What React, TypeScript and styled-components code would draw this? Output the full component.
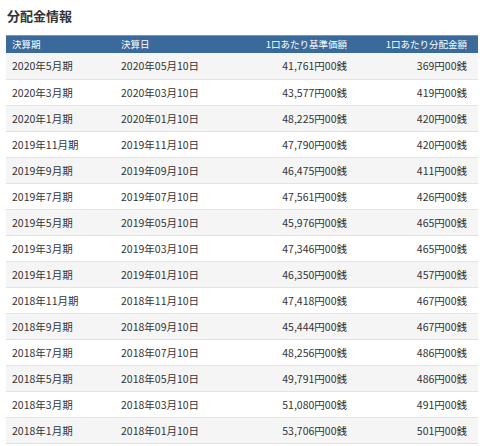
import React from "react";
import styled, { createGlobalStyle } from "styled-components";

const Global = createGlobalStyle`
  html, body { margin: 0; padding: 0; background: #fff; }
  body { font-family: "Noto Sans CJK JP", "Noto Sans", sans-serif; color: #333; }
  *, *::before, *::after { box-sizing: border-box; }
`;

const Page = styled.div`
  padding: 6px 2px 0 6px;
  width: 480px;
`;

const Title = styled.h2`
  margin: 0 0 10px 1px;
  font-size: 13px;
  line-height: 19px;
  font-weight: 700;
  color: #333;
`;

const Table = styled.table`
  width: 472px;
  border-collapse: collapse;
  table-layout: fixed;
  font-size: 10.5px;
`;

const HeadRow = styled.tr`
  background: #396a9b;
  border-top: 1px solid #7399c0;
`;

const Th = styled.th<{ $align?: "left" | "right"; $pr?: number; $w: number }>`
  width: ${(p) => p.$w}px;
  height: 17px;
  padding: 0 ${(p) => p.$pr ?? 6}px 0 6px;
  text-align: ${(p) => p.$align ?? "left"};
  color: #fff;
  font-size: 9.5px;
  font-weight: 400;
  line-height: 17px;
  white-space: nowrap;
  overflow: hidden;
`;

const Row = styled.tr<{ $shade: boolean }>`
  background: ${(p) => (p.$shade ? "#f5f5f5" : "#fff")};
  border-bottom: 1px solid #e2e2e2;
`;

const Td = styled.td<{ $align?: "left" | "right"; $pr?: number }>`
  height: 26px;
  padding: 1px ${(p) => p.$pr ?? 6}px 0 6px;
  text-align: ${(p) => p.$align ?? "left"};
  line-height: 24px;
  white-space: nowrap;
  color: #333;
  overflow: hidden;
`;

const data: [string, string, string, string][] = [
  ["2020年5月期", "2020年05月10日", "41,761円00銭", "369円00銭"],
  ["2020年3月期", "2020年03月10日", "43,577円00銭", "419円00銭"],
  ["2020年1月期", "2020年01月10日", "48,225円00銭", "420円00銭"],
  ["2019年11月期", "2019年11月10日", "47,790円00銭", "420円00銭"],
  ["2019年9月期", "2019年09月10日", "46,475円00銭", "411円00銭"],
  ["2019年7月期", "2019年07月10日", "47,561円00銭", "426円00銭"],
  ["2019年5月期", "2019年05月10日", "45,976円00銭", "465円00銭"],
  ["2019年3月期", "2019年03月10日", "47,346円00銭", "465円00銭"],
  ["2019年1月期", "2019年01月10日", "46,350円00銭", "457円00銭"],
  ["2018年11月期", "2018年11月10日", "47,418円00銭", "467円00銭"],
  ["2018年9月期", "2018年09月10日", "45,444円00銭", "467円00銭"],
  ["2018年7月期", "2018年07月10日", "48,256円00銭", "486円00銭"],
  ["2018年5月期", "2018年05月10日", "49,791円00銭", "486円00銭"],
  ["2018年3月期", "2018年03月10日", "51,080円00銭", "491円00銭"],
  ["2018年1月期", "2018年01月10日", "53,706円00銭", "501円00銭"],
];

export default function App() {
  return (
    <>
      <Global />
      <Page>
        <Title>分配金情報</Title>
        <Table>
          <thead>
            <HeadRow>
              <Th $w={109}>決算期</Th>
              <Th $w={110}>決算日</Th>
              <Th $w={127} $align="right" $pr={5}>
                1口あたり基準価額
              </Th>
              <Th $w={126} $align="right" $pr={11}>
                1口あたり分配金額
              </Th>
            </HeadRow>
          </thead>
          <tbody>
            {data.map((r, i) => (
              <Row key={r[0]} $shade={i % 2 === 0}>
                <Td>{r[0]}</Td>
                <Td>{r[1]}</Td>
                <Td $align="right" $pr={5}>
                  {r[2]}
                </Td>
                <Td $align="right" $pr={11}>
                  {r[3]}
                </Td>
              </Row>
            ))}
          </tbody>
        </Table>
      </Page>
    </>
  );
}
